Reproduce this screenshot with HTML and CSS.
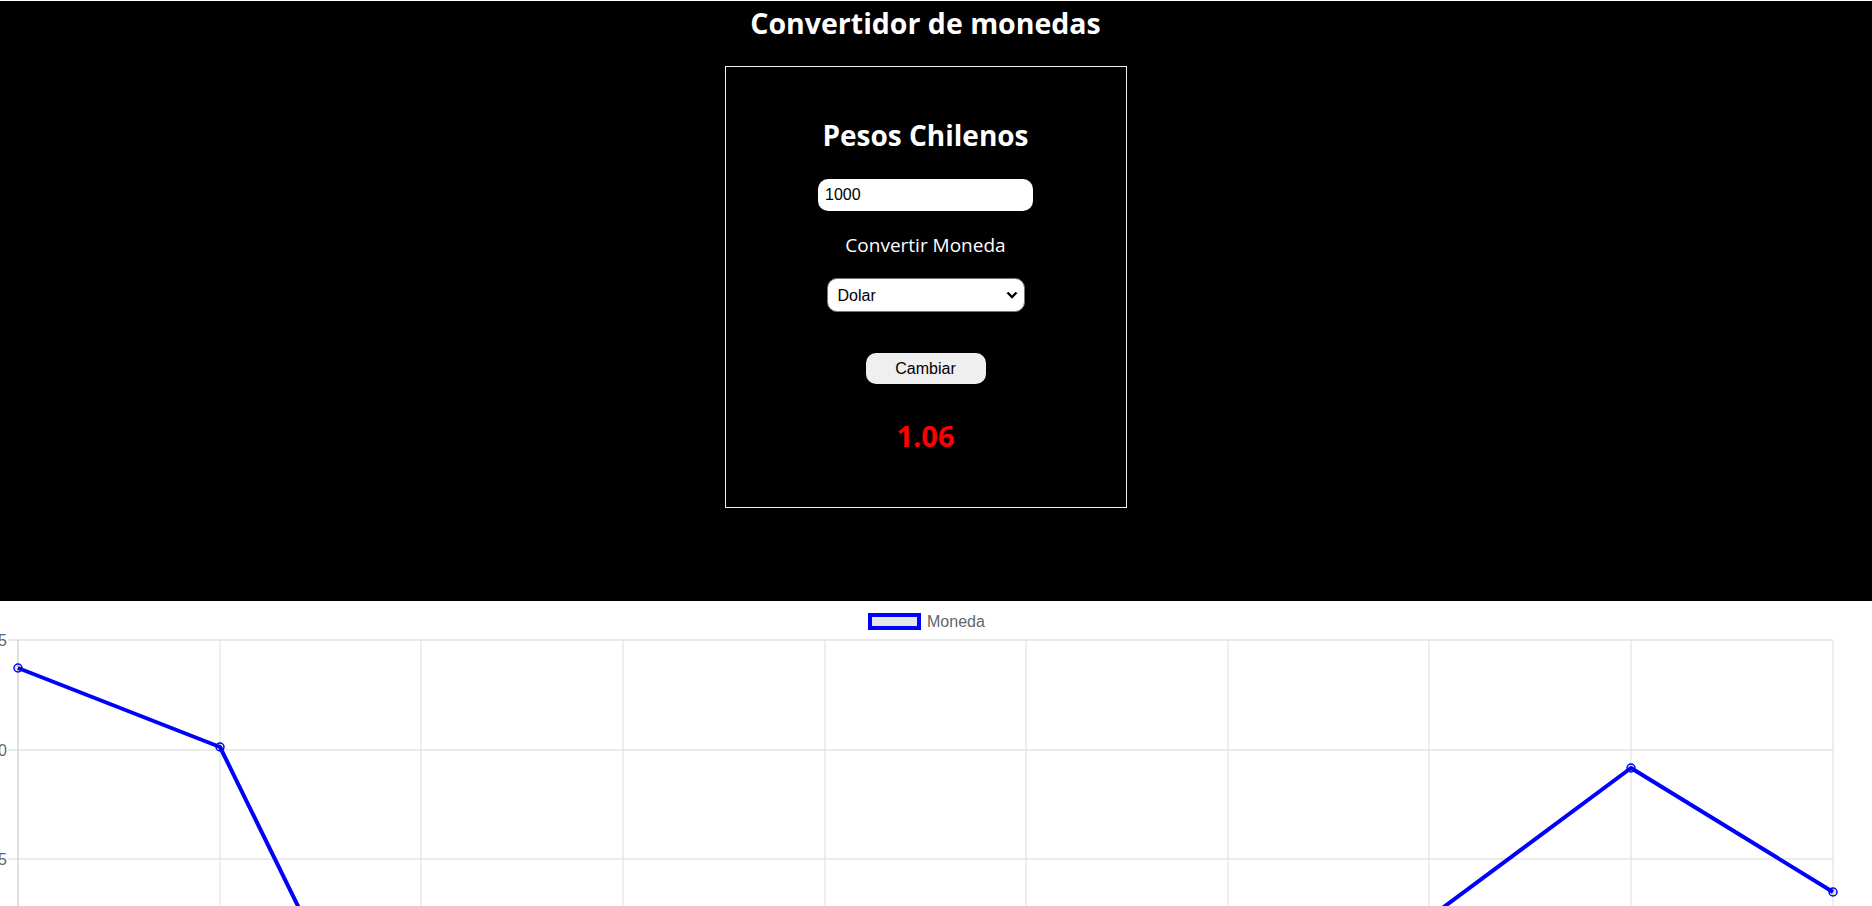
FILE: index.html
```html
<!DOCTYPE html>
<html lang="es">
<head>
<meta charset="utf-8">
<title>Convertidor de monedas</title>
<link rel="stylesheet" href="styles.css">
</head>
<body>
<main class="converter">
  <h1 class="title">Convertidor de monedas</h1>
  <section class="card">
    <h2 class="card-title">Pesos Chilenos</h2>
    <input class="amount" type="text" value="1000">
    <p class="label">Convertir Moneda</p>
    <select class="currency">
      <option>Dolar</option>
      <option>Euro</option>
    </select>
    <button class="btn" type="button">Cambiar</button>
    <p class="result">1.06</p>
  </section>
</main>
<section class="chart">
  <svg class="chart-svg" width="1872" height="305" viewBox="0 601 1872 305" xmlns="http://www.w3.org/2000/svg">
    <rect x="870" y="615" width="49" height="13" fill="#e6e6e6" stroke="#0000ff" stroke-width="4"/>
    <text x="927" y="627" font-family="Liberation Sans, Arial, sans-serif" font-size="16" fill="#666">Moneda</text>
    <g stroke="#e5e5e5" stroke-width="1.3">
      <line x1="8" y1="640" x2="1833" y2="640"/>
      <line x1="8" y1="750" x2="1833" y2="750"/>
      <line x1="8" y1="859" x2="1833" y2="859"/>
      <line x1="220" y1="640" x2="220" y2="906"/>
      <line x1="421" y1="640" x2="421" y2="906"/>
      <line x1="623" y1="640" x2="623" y2="906"/>
      <line x1="825" y1="640" x2="825" y2="906"/>
      <line x1="1026" y1="640" x2="1026" y2="906"/>
      <line x1="1228" y1="640" x2="1228" y2="906"/>
      <line x1="1429" y1="640" x2="1429" y2="906"/>
      <line x1="1631" y1="640" x2="1631" y2="906"/>
      <line x1="1833" y1="640" x2="1833" y2="906"/>
    </g>
    <line x1="18" y1="640" x2="18" y2="906" stroke="#cfcfcf" stroke-width="1.3"/>
    <g font-family="Liberation Sans, Arial, sans-serif" font-size="16" fill="#666" text-anchor="end">
      <text x="7" y="645.5">945</text>
      <text x="7" y="755.5">940</text>
      <text x="7" y="864.5">935</text>
    </g>
    <polyline fill="none" stroke="#0000ff" stroke-width="4" stroke-linejoin="round" points="18,668 220,747 421,1157 623,1250 825,1200 1026,1250 1228,1100 1429,918 1631,768 1833,892"/>
    <g fill="rgba(0,0,0,0.1)" stroke="#0000ff" stroke-width="1.5">
      <circle cx="18" cy="668" r="4"/>
      <circle cx="220" cy="747" r="4"/>
      <circle cx="1631" cy="768" r="4"/>
      <circle cx="1833" cy="892" r="4"/>
    </g>
  </svg>
</section>
</body>
</html>
```
FILE: styles.css
```css
html, body {
  margin: 0;
  padding: 0;
  overflow: hidden;
}

body {
  background: #fff;
  padding-top: 1px;
  font-family: "Open Sans", "Noto Sans", sans-serif;
}

.converter {
  background: #000;
  color: #fff;
  height: 600px;
  box-sizing: border-box;
  padding-right: 21px;
  display: flex;
  flex-direction: column;
  align-items: center;
}

.title {
  margin: 2px 0 0;
  font-size: 28.5px;
  line-height: 40px;
  font-weight: 700;
}

.card {
  margin-top: 23px;
  width: 400px;
  border: 1px solid #f0f0f0;
  display: flex;
  flex-direction: column;
  align-items: center;
  padding-bottom: 53px;
}

.card-title {
  margin: 50px 0 0;
  font-size: 28px;
  line-height: 36px;
  font-weight: 700;
}

.amount {
  margin-top: 26px;
  width: 215px;
  height: 32px;
  box-sizing: border-box;
  border: none;
  border-radius: 10px;
  padding: 0 7px;
  font-family: "Liberation Sans", Arial, sans-serif;
  font-size: 16px;
  color: #000;
  background: #fff;
}

.label {
  margin: 20px 0 0;
  font-size: 19px;
  line-height: 28px;
}

.currency {
  margin-top: 19px;
  width: 198px;
  height: 34px;
  box-sizing: border-box;
  border: 1px solid #767676;
  border-radius: 10px;
  padding: 0 24px 0 10px;
  -webkit-appearance: none;
  appearance: none;
  background-color: #fff;
  background-image: url("data:image/svg+xml;utf8,<svg xmlns='http://www.w3.org/2000/svg' width='12' height='8' viewBox='0 0 12 8'><path d='M1.5 1.5 L6 6 L10.5 1.5' fill='none' stroke='black' stroke-width='2.4'/></svg>");
  background-repeat: no-repeat;
  background-position: right 6px center;
  background-size: 12px 8px;
  color: #000;
  font-family: "Liberation Sans", Arial, sans-serif;
  font-size: 16px;
}

.btn {
  margin-top: 41px;
  width: 120px;
  height: 31px;
  border: none;
  border-radius: 10px;
  background: #efefef;
  color: #000;
  font-family: "Liberation Sans", Arial, sans-serif;
  font-size: 16px;
}

.result {
  margin: 34px 0 0;
  font-size: 29px;
  line-height: 36px;
  font-weight: 700;
  color: #ff0000;
}

.chart {
  height: 305px;
  overflow: hidden;
}

.chart-svg {
  display: block;
}
```
